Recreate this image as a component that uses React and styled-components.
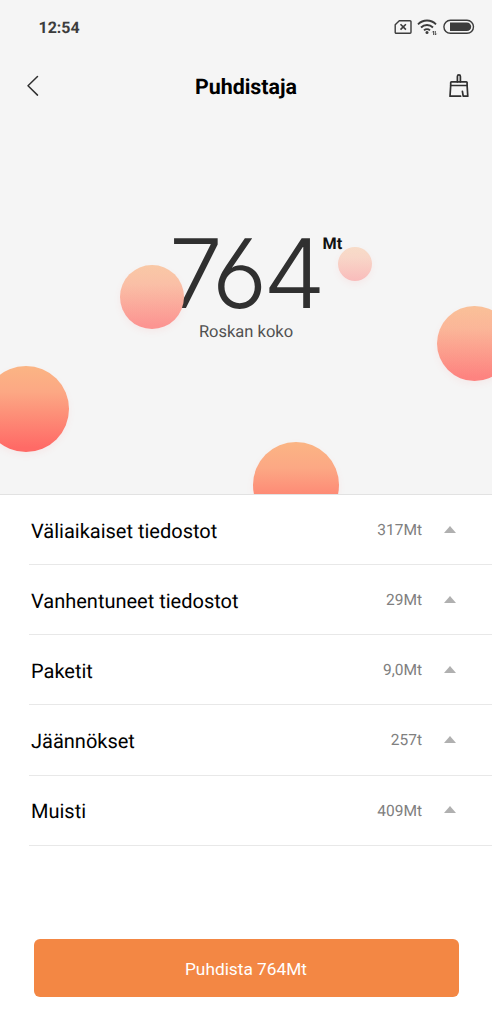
import React from 'react'
import styled, { createGlobalStyle } from 'styled-components'

const GlobalStyle = createGlobalStyle`
  * {
    box-sizing: border-box;
  }
  body {
    margin: 0;
    background: #fff;
    font-family: Roboto, 'Noto Sans', sans-serif;
    text-rendering: geometricPrecision;
  }
`

const Screen = styled.div`
  display: flex;
  flex-direction: column;
  width: 492px;
  height: 1024px;
  overflow: hidden;
  background: #fff;
`

const Hero = styled.section`
  position: relative;
  flex: none;
  height: 495px;
  overflow: hidden;
  background: #f5f5f5;
  border-bottom: 1px solid #e2e2e2;
`

const StatusBar = styled.div`
  display: flex;
  align-items: center;
  justify-content: space-between;
  height: 54px;
  padding: 0 17.5px 0 38.5px;
`

const Clock = styled.span`
  padding-top: 1px;
  color: #3c3c3c;
  font-size: 16px;
  font-weight: 700;
  line-height: 20px;
`

const StatusIcons = styled.div`
  display: flex;
  align-items: center;
  height: 20px;
`

const Header = styled.header`
  display: grid;
  grid-template-columns: 40px 1fr 40px;
  align-items: center;
  height: 64px;
  padding: 0 12px;
`

const Title = styled.h1`
  margin: 0;
  padding-top: 3px;
  color: #000;
  font-size: 21.4px;
  font-weight: 700;
  line-height: 28px;
  text-align: center;
`

const IconButton = styled.button`
  display: flex;
  align-items: center;
  justify-content: center;
  width: 40px;
  height: 40px;
  padding: 0;
  border: 0;
  background: none;
  color: #303030;
`

const Total = styled.div`
  display: flex;
  flex-direction: column;
  align-items: center;
  padding-top: 108px;
`

const Amount = styled.div`
  position: relative;
  display: flex;
  width: 154px;
  height: 96px;
  color: #303030;
  font-family: Inter, sans-serif;
  font-size: 96px;
  font-weight: 300;
  font-feature-settings: 'cv03' 1;
  line-height: 96px;
`

const Digit = styled.span`
  flex: none;
  width: ${({ $width }) => $width}px;
  white-space: nowrap;
  transform: scaleX(${({ $stretch }) => $stretch || 1});
  transform-origin: left;
`

const Unit = styled.span`
  position: absolute;
  top: 8px;
  left: 153.5px;
  color: #111;
  font-family: Roboto, sans-serif;
  font-size: 16.2px;
  font-weight: 700;
  line-height: 20px;
`

const Caption = styled.p`
  margin: -1px 0 0;
  color: #505050;
  font-size: 16.5px;
  line-height: 24px;
`

/* faded towards the page grey, but still opaque over the digits */
const Bubble = styled.span`
  --veil: rgba(245, 245, 245, ${({ $fade }) => $fade || 0});
  position: absolute;
  top: ${({ $y }) => $y}px;
  left: ${({ $x }) => $x}px;
  width: ${({ $size }) => $size}px;
  height: ${({ $size }) => $size}px;
  border-radius: 50%;
  background:
    linear-gradient(var(--veil), var(--veil)),
    linear-gradient(#fbb584 0%, #fca884 30%, #ff6a66 95%);
  box-shadow: 0 3px 7px rgba(255, 106, 102, 0.08);
`

const List = styled.ul`
  flex: none;
  margin: 0;
  padding: 0 0 0 29px;
  list-style: none;
`

const Row = styled.li`
  display: flex;
  align-items: center;
  height: 70.15px;
  padding: 2px 36px 0 2px;
  border-bottom: 1px solid #e8e8e8;
`

const RowName = styled.span`
  flex: 1;
  color: #000;
  font-size: 20px;
  line-height: 28px;
`

const RowSize = styled.span`
  margin-top: -1px;
  color: #808080;
  font-size: 15.5px;
  line-height: 20px;
`

const Arrow = styled.span`
  width: 0;
  height: 0;
  margin: -3px 0 0 22px;
  border-right: 6px solid transparent;
  border-bottom: 7px solid #b0b0b0;
  border-left: 6px solid transparent;
`

const Footer = styled.footer`
  margin-top: auto;
  padding: 0 33.5px 27px;
`

const CleanButton = styled.button`
  display: block;
  width: 100%;
  height: 58px;
  padding: 2px 0 0;
  border: 0;
  border-radius: 6px;
  background: #f38744;
  color: #fff;
  font-family: inherit;
  font-size: 17.3px;
`

const bubbles = [
  { x: 120, y: 265, size: 64, fade: 0.3 },
  { x: 338, y: 247, size: 34, fade: 0.6 },
  { x: 437, y: 305.5, size: 75, fade: 0.18 },
  { x: -17, y: 366, size: 86 },
  { x: 253, y: 442, size: 86 },
]

const items = [
  { name: 'Väliaikaiset tiedostot', size: '317Mt' },
  { name: 'Vanhentuneet tiedostot', size: '29Mt' },
  { name: 'Paketit', size: '9,0Mt' },
  { name: 'Jäännökset', size: '257t' },
  { name: 'Muisti', size: '409Mt' },
]

const SimIcon = () => (
  <svg width='18' height='20' viewBox='0 0 18 20' fill='none' stroke='#3c3c3c'>
    <path d='M5.3 3.7H16a1 1 0 0 1 1 1v10.6a1 1 0 0 1-1 1H2.2a1 1 0 0 1-1-1V7.8Z' strokeWidth='1.4' strokeLinejoin='round' />
    <path d='m6.5 7.2 5.4 5.4m0-5.4-5.4 5.4' strokeWidth='1.6' />
  </svg>
)

const WifiIcon = () => (
  <svg width='22' height='20' viewBox='0 0 22 20' fill='none' stroke='#3c3c3c' strokeWidth='1.9' style={{ marginLeft: 5 }}>
    <path d='M1 7.3a12.6 12.6 0 0 1 18 0' />
    <path d='M4 10.5a8.5 8.5 0 0 1 12 0' />
    <path d='M7 13.4a4.3 4.3 0 0 1 6 0' />
    <circle cx='10' cy='15.6' r='1.5' fill='#3c3c3c' stroke='none' />
    <path d='M16.6 18v-4l-1.2 1.3M18.3 14v4l1.2-1.3' strokeWidth='.9' />
  </svg>
)

const BatteryIcon = () => (
  <svg width='32' height='20' viewBox='0 0 32 20' fill='none' style={{ marginLeft: 4 }}>
    <rect x='.9' y='3.3' width='29.6' height='13' rx='6.5' stroke='#3c3c3c' strokeWidth='1.4' />
    <path d='M7 5.5h16.9a4.3 4.3 0 0 1 0 8.6H7Z' fill='#3c3c3c' />
  </svg>
)

const BackIcon = () => (
  <svg width='40' height='40' viewBox='0 0 40 40' fill='none' stroke='currentColor' strokeWidth='1.5' strokeLinecap='round' strokeLinejoin='round'>
    <path d='m25.5 10.5-9.5 9.3 9.5 9.3' />
  </svg>
)

const BrushIcon = () => (
  <svg width='24' height='26' viewBox='0 0 24 26' fill='none' stroke='currentColor' strokeWidth='1.7' strokeLinejoin='round' strokeLinecap='round'>
    <path d='M9.4 8.8V3.4a1.5 1.5 0 0 1 3 0v5.4' />
    <path d='M2.7 9.6a.8.8 0 0 1 .8-.8h14.8a.8.8 0 0 1 .8.8v2.9H2.7Z' />
    <path d='M2.7 12.5 2 23.2H12.6m1.8-4.8.8 4.8h4.6L19.1 12.5' />
  </svg>
)

const App = () => {
  return (
    <Screen>
      <GlobalStyle />
      <Hero>
        <StatusBar>
          <Clock>12:54</Clock>
          <StatusIcons>
            <SimIcon />
            <WifiIcon />
            <BatteryIcon />
          </StatusIcons>
        </StatusBar>

        <Header>
          <IconButton aria-label='Takaisin'>
            <BackIcon />
          </IconButton>
          <Title>Puhdistaja</Title>
          <IconButton aria-label='Puhdista'>
            <BrushIcon />
          </IconButton>
        </Header>

        <Total>
          <Amount>
            <Digit $width={43}>7</Digit>
            <Digit $width={51}>6</Digit>
            <Digit $width={53} $stretch={1.04}>4</Digit>
            <Unit>Mt</Unit>
          </Amount>
          <Caption>Roskan koko</Caption>
        </Total>

        {bubbles.map(({ x, y, size, fade }) => (
          <Bubble key={x} $x={x} $y={y} $size={size} $fade={fade} />
        ))}
      </Hero>

      <List>
        {items.map(({ name, size }) => (
          <Row key={name}>
            <RowName>{name}</RowName>
            <RowSize>{size}</RowSize>
            <Arrow />
          </Row>
        ))}
      </List>

      <Footer>
        <CleanButton>Puhdista 764Mt</CleanButton>
      </Footer>
    </Screen>
  )
}

export default App
